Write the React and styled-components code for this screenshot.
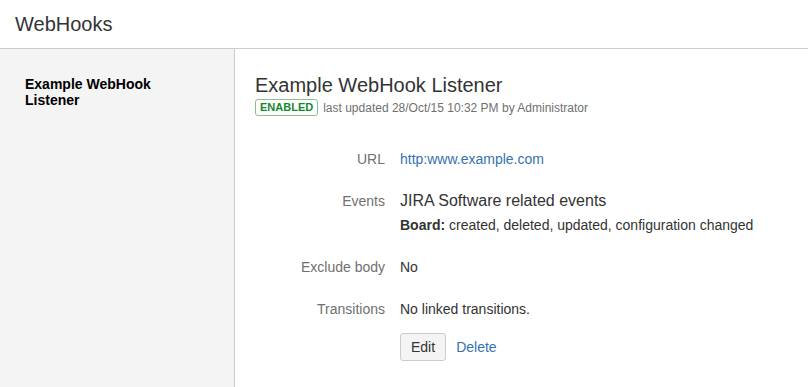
import React from "react";
import styled, { createGlobalStyle } from "styled-components";

const GlobalStyle = createGlobalStyle`
  html, body {
    margin: 0;
    padding: 0;
    background: #fff;
  }
  body {
    font-family: "Liberation Sans", Arial, sans-serif;
    font-size: 14px;
    color: #333;
  }
`;

const details = [
  { label: "URL", link: "http:www.example.com" },
  { label: "Events", events: true },
  { label: "Exclude body", text: "No" },
  { label: "Transitions", text: "No linked transitions." },
];

const App = () => {
  return (
    <Page>
      <GlobalStyle />
      <Header>
        <PageTitle>WebHooks</PageTitle>
      </Header>
      <Body>
        <Sidebar>
          <SidebarItem>Example WebHook Listener</SidebarItem>
        </Sidebar>
        <Main>
          <Heading>Example WebHook Listener</Heading>
          <Meta>
            <Lozenge>ENABLED</Lozenge>
            <span>last updated 28/Oct/15 10:32 PM by Administrator</span>
          </Meta>
          <DetailGrid>
            {details.map(d => (
              <React.Fragment key={d.label}>
                <Label>{d.label}</Label>
                <Value>
                  {d.link && <Link href='#'>{d.link}</Link>}
                  {d.text}
                  {d.events && (
                    <>
                      <EventTitle>JIRA Software related events</EventTitle>
                      <EventLine>
                        <b>Board:</b> created, deleted, updated, configuration changed
                      </EventLine>
                    </>
                  )}
                </Value>
              </React.Fragment>
            ))}
            <span />
            <Actions>
              <Button>Edit</Button>
              <Link href='#'>Delete</Link>
            </Actions>
          </DetailGrid>
        </Main>
      </Body>
    </Page>
  );
};

const Page = styled.div`
  width: 808px;
  height: 387px;
  display: flex;
  flex-direction: column;
  overflow: hidden;
`;
const Header = styled.header`
  height: 48px;
  border-bottom: 1px solid #ccc;
  display: flex;
  align-items: center;
  padding: 0 15px;
  flex-shrink: 0;
`;
const PageTitle = styled.h1`
  margin: 0;
  font-size: 20px;
  font-weight: normal;
  color: #333;
`;
const Body = styled.div`
  flex: 1;
  display: flex;
`;
const Sidebar = styled.nav`
  width: 235px;
  background: #f4f4f4;
  border-right: 1px solid #ccc;
  padding: 27px 45px 0 25px;
  box-sizing: border-box;
  flex-shrink: 0;
`;
const SidebarItem = styled.div`
  font-weight: bold;
  font-size: 14px;
  line-height: 16px;
  color: #000;
`;
const Main = styled.main`
  flex: 1;
  padding: 24px 20px 0 20px;
`;
const Heading = styled.h2`
  margin: 0;
  font-size: 20px;
  font-weight: normal;
  line-height: 24px;
  color: #333;
`;
const Meta = styled.div`
  display: flex;
  align-items: center;
  gap: 5px;
  margin-top: 2px;
  font-size: 12px;
  color: #707070;
`;
const Lozenge = styled.span`
  display: inline-block;
  border: 1px solid #86c28e;
  border-radius: 3px;
  color: #14892c;
  font-size: 11px;
  font-weight: bold;
  line-height: 15px;
  padding: 0 4px;
`;
const DetailGrid = styled.div`
  display: grid;
  grid-template-columns: 130px 1fr;
  column-gap: 15px;
  row-gap: 22px;
  margin-top: 33px;
  line-height: 20px;
`;
const Label = styled.div`
  text-align: right;
  color: #707070;
`;
const Value = styled.div`
  color: #333;
`;
const Link = styled.a`
  color: #3572b0;
  text-decoration: none;
`;
const EventTitle = styled.div`
  font-size: 16px;
`;
const EventLine = styled.div`
  margin-top: 4px;
  b {
    font-weight: bold;
  }
`;
const Actions = styled.div`
  display: flex;
  align-items: center;
  gap: 10px;
  margin-top: -8px;
`;
const Button = styled.button`
  font-family: inherit;
  font-size: 14px;
  color: #333;
  background: #f4f4f4;
  border: 1px solid #ccc;
  border-radius: 3px;
  height: 28px;
  padding: 0 10px;
`;

export default App;
